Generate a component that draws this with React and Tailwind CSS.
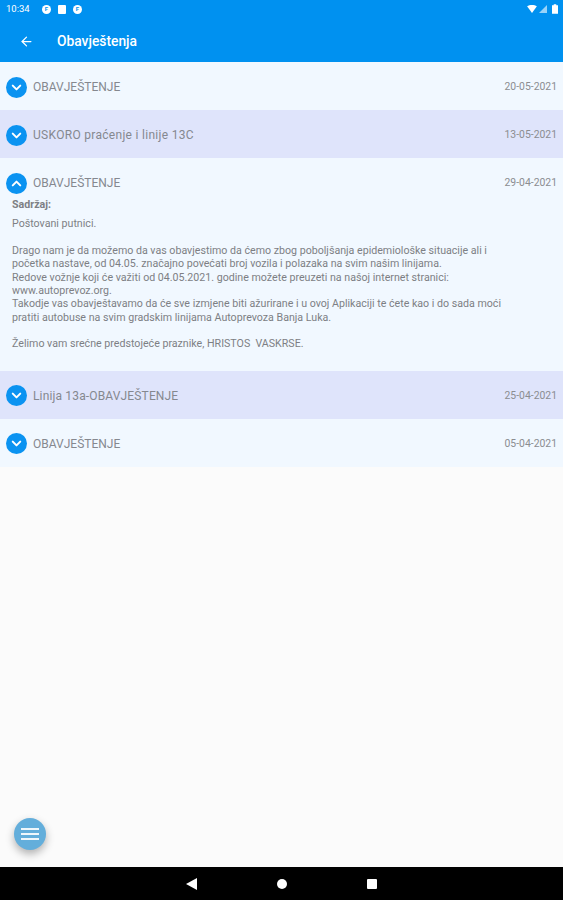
import { ArrowLeft, ChevronDown, ChevronUp } from 'lucide-react';

const notices = [
  { title: 'OBAVJEŠTENJE', date: '20-05-2021' },
  { title: 'USKORO praćenje i linije 13C', date: '13-05-2021', titleClass: 'tracking-[0.3px]' },
  { title: 'OBAVJEŠTENJE', date: '29-04-2021', open: true },
  { title: 'Linija 13a-OBAVJEŠTENJE', date: '25-04-2021', titleClass: 'tracking-[0.15px]' },
  { title: 'OBAVJEŠTENJE', date: '05-04-2021' },
];

function StatusBar() {
  return (
    <div className="h-5 pb-[2px] flex items-center justify-between pl-[6px] pr-[5px] text-white">
      <div className="flex items-center">
        <span className="text-[9.5px] leading-none w-[36px]">10:34</span>
        <div className="flex items-center gap-[7px]">
          <span className="w-[9px] h-[9px] rounded-full bg-white flex items-center justify-center text-[6px] font-bold leading-none text-[#0091f0]">F</span>
          <span className="w-[8px] h-[9px] rounded-[1px] bg-white" />
          <span className="w-[9px] h-[9px] rounded-full bg-white flex items-center justify-center text-[6px] font-bold leading-none text-[#0091f0]">F</span>
        </div>
      </div>
      <div className="flex items-center gap-[2px]">
        <svg width="10" height="8" viewBox="0 0 11 9"><path d="M0 1.5C3-.5 8-.5 11 1.5L5.5 9z" fill="#fff" /></svg>
        <svg width="8" height="8" viewBox="0 0 9 9"><path d="M9 0v9H0z" fill="#fff" fillOpacity="0.6" /></svg>
        <svg width="6" height="10" viewBox="0 0 7 11" className="ml-[3px]"><path d="M2 0h3v1h2v10H0V1h2z" fill="#fff" /></svg>
      </div>
    </div>
  );
}

function NoticeRow({ title, date, open, shaded, titleClass = '' }) {
  const Chevron = open ? ChevronUp : ChevronDown;
  return (
    <div className={shaded ? 'bg-[#dfe4fb]' : 'bg-[#f1f8ff]'}>
      <div className="h-12 pt-[2px] flex items-center justify-between pl-[6px] pr-[6px]">
        <div className="flex items-center gap-[6px]">
          <span className="w-[21px] h-[21px] rounded-full bg-[#0b93f1] flex items-center justify-center">
            <Chevron size={15} strokeWidth={3.2} color="#fff" />
          </span>
          <span className={`text-[12px] text-[#85888f] ${titleClass}`}>{title}</span>
        </div>
        <span className="text-[10.4px] text-[#8b8d91]">{date}</span>
      </div>
      {open && (
        <div className="-mt-[8px] pl-[12px] pr-[6px] pb-[20px] text-[10.65px] leading-[13.4px] text-[#7d7f84]">
          <p className="font-bold mb-[6px]">Sadržaj:</p>
          <p>Poštovani putnici.</p>
          <p className="mt-[13px]">Drago nam je da možemo da vas obavjestimo da ćemo zbog poboljšanja epidemiološke situacije ali i</p>
          <p>početka nastave, od 04.05. značajno povećati broj vozila i polazaka na svim našim linijama.</p>
          <p>Redove vožnje koji će važiti od 04.05.2021. godine možete preuzeti na našoj internet stranici:</p>
          <p>www.autoprevoz.org.</p>
          <p>Takodje vas obavještavamo da će sve izmjene biti ažurirane i u ovoj Aplikaciji te ćete kao i do sada moći</p>
          <p>pratiti autobuse na svim gradskim linijama Autoprevoza Banja Luka.</p>
          <p className="mt-[13px]">Želimo vam srećne predstojeće praznike, HRISTOS&nbsp; VASKRSE.</p>
        </div>
      )}
    </div>
  );
}

export default function App() {
  return (
    <div className="relative w-[563px] h-[900px] flex flex-col bg-[#fbfbfb] font-['Roboto',sans-serif] overflow-hidden">
      <header className="bg-[#0091f0] h-[62px] shrink-0">
        <StatusBar />
        <div className="h-[42px] flex items-center pl-[19px] text-white">
          <ArrowLeft size={15} strokeWidth={2} />
          <span className="ml-[23px] text-[13.8px] font-medium">Obavještenja</span>
        </div>
      </header>

      <div className="flex-1">
        {notices.map((n, i) => (
          <NoticeRow key={i} {...n} shaded={i % 2 === 1} />
        ))}
      </div>

      <button className="absolute left-[14px] top-[818px] w-8 h-8 rounded-full bg-[#63aedb] shadow-[0_4px_8px_rgba(0,0,0,0.3)] flex flex-col items-center justify-center gap-[2.5px]">
        <span className="w-[18px] h-[2.5px] bg-white/90" />
        <span className="w-[18px] h-[2.5px] bg-white/90" />
        <span className="w-[18px] h-[2.5px] bg-white/90" />
      </button>

      <nav className="h-[33px] shrink-0 bg-black flex items-center justify-center gap-[80px]">
        <svg width="11" height="12" viewBox="0 0 11 12" className="-ml-[1px]"><path d="M11 0v12L0 6z" fill="#fff" /></svg>
        <span className="w-[10px] h-[10px] rounded-full bg-white" />
        <span className="w-[10px] h-[10px] rounded-[1px] bg-white" />
      </nav>
    </div>
  );
}
